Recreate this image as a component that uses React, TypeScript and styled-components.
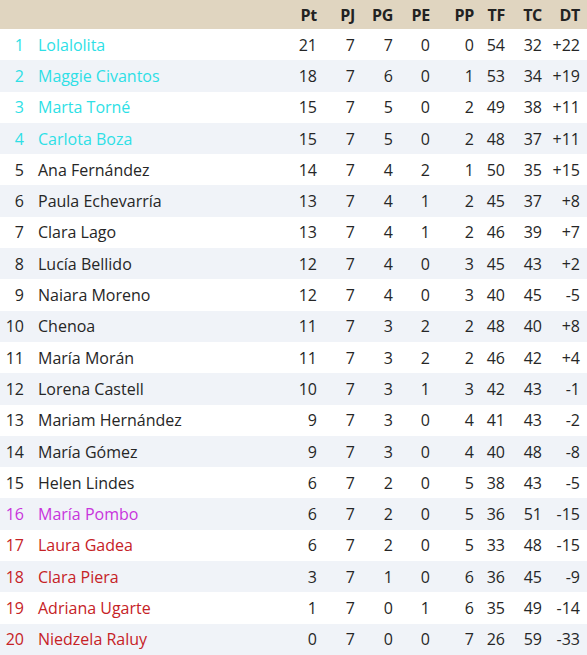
import React from 'react';
import styled, { createGlobalStyle } from 'styled-components';

type Zone = 'top' | 'mid' | 'warn' | 'down';

interface IRow {
    name: string;
    pt: number;
    pj: number;
    pg: number;
    pe: number;
    pp: number;
    tf: number;
    tc: number;
    zone: Zone;
}

const rows: IRow[] = [
    { name: 'Lolalolita', pt: 21, pj: 7, pg: 7, pe: 0, pp: 0, tf: 54, tc: 32, zone: 'top' },
    { name: 'Maggie Civantos', pt: 18, pj: 7, pg: 6, pe: 0, pp: 1, tf: 53, tc: 34, zone: 'top' },
    { name: 'Marta Torné', pt: 15, pj: 7, pg: 5, pe: 0, pp: 2, tf: 49, tc: 38, zone: 'top' },
    { name: 'Carlota Boza', pt: 15, pj: 7, pg: 5, pe: 0, pp: 2, tf: 48, tc: 37, zone: 'top' },
    { name: 'Ana Fernández', pt: 14, pj: 7, pg: 4, pe: 2, pp: 1, tf: 50, tc: 35, zone: 'mid' },
    { name: 'Paula Echevarría', pt: 13, pj: 7, pg: 4, pe: 1, pp: 2, tf: 45, tc: 37, zone: 'mid' },
    { name: 'Clara Lago', pt: 13, pj: 7, pg: 4, pe: 1, pp: 2, tf: 46, tc: 39, zone: 'mid' },
    { name: 'Lucía Bellido', pt: 12, pj: 7, pg: 4, pe: 0, pp: 3, tf: 45, tc: 43, zone: 'mid' },
    { name: 'Naiara Moreno', pt: 12, pj: 7, pg: 4, pe: 0, pp: 3, tf: 40, tc: 45, zone: 'mid' },
    { name: 'Chenoa', pt: 11, pj: 7, pg: 3, pe: 2, pp: 2, tf: 48, tc: 40, zone: 'mid' },
    { name: 'María Morán', pt: 11, pj: 7, pg: 3, pe: 2, pp: 2, tf: 46, tc: 42, zone: 'mid' },
    { name: 'Lorena Castell', pt: 10, pj: 7, pg: 3, pe: 1, pp: 3, tf: 42, tc: 43, zone: 'mid' },
    { name: 'Mariam Hernández', pt: 9, pj: 7, pg: 3, pe: 0, pp: 4, tf: 41, tc: 43, zone: 'mid' },
    { name: 'María Gómez', pt: 9, pj: 7, pg: 3, pe: 0, pp: 4, tf: 40, tc: 48, zone: 'mid' },
    { name: 'Helen Lindes', pt: 6, pj: 7, pg: 2, pe: 0, pp: 5, tf: 38, tc: 43, zone: 'mid' },
    { name: 'María Pombo', pt: 6, pj: 7, pg: 2, pe: 0, pp: 5, tf: 36, tc: 51, zone: 'warn' },
    { name: 'Laura Gadea', pt: 6, pj: 7, pg: 2, pe: 0, pp: 5, tf: 33, tc: 48, zone: 'down' },
    { name: 'Clara Piera', pt: 3, pj: 7, pg: 1, pe: 0, pp: 6, tf: 36, tc: 45, zone: 'down' },
    { name: 'Adriana Ugarte', pt: 1, pj: 7, pg: 0, pe: 1, pp: 6, tf: 35, tc: 49, zone: 'down' },
    { name: 'Niedzela Raluy', pt: 0, pj: 7, pg: 0, pe: 0, pp: 7, tf: 26, tc: 59, zone: 'down' },
];

const zoneColor: Record<Zone, string> = {
    top: '#2edfe6',
    mid: '#262626',
    warn: '#c834dc',
    down: '#c62226',
};

const widths = [31, 249, 44, 38, 38, 37, 44, 31, 37, 38];
const heads = ['', '', 'Pt', 'PJ', 'PG', 'PE', 'PP', 'TF', 'TC', 'DT'];

const formatDiff = (d: number) => (d > 0 ? `+${d}` : `${d}`);

const App: React.FC = () => {
    return (
        <>
            <GlobalStyle />
            <Table>
                <colgroup>
                    {widths.map((w, i) => (
                        <col key={i} style={{ width: w }} />
                    ))}
                </colgroup>
                <thead>
                    <HeadRow>
                        {heads.map((h, i) => (
                            <Th key={i}>{h}</Th>
                        ))}
                    </HeadRow>
                </thead>
                <tbody>
                    {rows.map((r, i) => (
                        <Row key={r.name} $striped={i % 2 === 1} $color={zoneColor[r.zone]}>
                            <Pos>{i + 1}</Pos>
                            <Name>{r.name}</Name>
                            <Num>{r.pt}</Num>
                            <Num>{r.pj}</Num>
                            <Num>{r.pg}</Num>
                            <Num>{r.pe}</Num>
                            <Num>{r.pp}</Num>
                            <Num>{r.tf}</Num>
                            <Num>{r.tc}</Num>
                            <Num>{formatDiff(r.tf - r.tc)}</Num>
                        </Row>
                    ))}
                </tbody>
            </Table>
        </>
    );
};

const GlobalStyle = createGlobalStyle`
    body {
        margin: 0;
        background: #ffffff;
        font-family: 'Open Sans', 'Noto Sans', sans-serif;
    }
`;

const Table = styled.table`
    width: 587px;
    table-layout: fixed;
    border-collapse: collapse;
    font-size: 16px;
    color: #262626;
`;

const HeadRow = styled.tr`
    height: 29px;
    background: #e0d5c0;
`;

const Th = styled.th`
    padding: 0 7px 0 0;
    text-align: right;
    font-weight: 700;
    color: #222222;
    letter-spacing: -0.3px;
`;

const Row = styled.tr<{ $striped: boolean; $color: string }>`
    height: 31.3px;
    background: ${(p) => (p.$striped ? '#f0f3f8' : '#ffffff')};
    color: ${(p) => p.$color};
`;

const Pos = styled.td`
    padding: 0 7px 0 0;
    text-align: right;
`;

const Name = styled.td`
    padding: 0 0 0 7px;
    white-space: nowrap;
`;

const Num = styled.td`
    padding: 0 7px 0 0;
    text-align: right;
    color: #262626;
`;

export default App;
